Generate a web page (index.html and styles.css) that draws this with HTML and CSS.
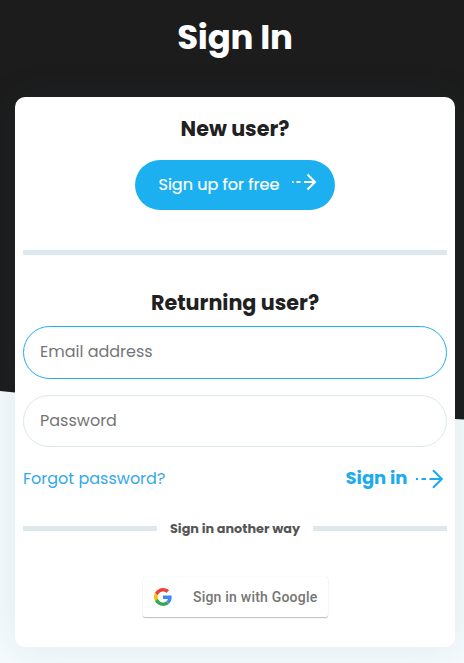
FILE: index.html
```html
<!DOCTYPE html>
<html lang="en">
<head>
<meta charset="utf-8">
<title>Sign In</title>
<link rel="stylesheet" href="styles.css">
</head>
<body>
<svg class="backdrop" viewBox="0 0 464 663" aria-hidden="true"><path fill="#1c1c1c" d="M0 0H464V419.5L455 419Q250 410 15 392.4L0 391Z"/></svg>
<main class="page">
  <h1 class="title"><span>Sign In</span></h1>
  <section class="card">
    <h2 class="heading new"><span>New user?</span></h2>
    <a class="signup" href="#"><span class="signup-label">Sign up for free</span>
      <svg width="26" height="18" viewBox="0 0 26 18" fill="none" stroke="currentColor" stroke-width="2"><path d="M1 9h1.6M5.5 9h4M13 9h11M16.5 1.5 24 9l-7.5 7.5"/></svg>
    </a>
    <hr class="rule">
    <h2 class="heading returning"><span>Returning user?</span></h2>
    <form class="form">
      <input class="field email" type="text" placeholder="Email address">
      <input class="field password" type="password" placeholder="Password">
      <div class="actions">
        <a class="forgot" href="#">Forgot password?</a>
        <button class="signin" type="button"><span>Sign in</span>
          <svg width="29" height="20" viewBox="0 0 29 20" fill="none" stroke="currentColor" stroke-width="2.1"><path d="M1 10h2M6.5 10h4.5M14.5 10h12.5M18 1.2 26.8 10 18 18.8"/></svg>
        </button>
      </div>
    </form>
    <div class="another"><span class="another-label">Sign in another way</span></div>
    <button class="google" type="button">
      <svg width="18" height="18" viewBox="0 0 48 48"><path fill="#EA4335" d="M24 9.5c3.54 0 6.71 1.22 9.21 3.6l6.85-6.85C35.9 2.38 30.47 0 24 0 14.62 0 6.51 5.38 2.56 13.22l7.98 6.19C12.43 13.72 17.74 9.5 24 9.5z"/><path fill="#4285F4" d="M46.98 24.55c0-1.57-.15-3.09-.38-4.55H24v9.02h12.94c-.58 2.96-2.26 5.48-4.78 7.18l7.73 6c4.51-4.18 7.09-10.36 7.09-17.65z"/><path fill="#FBBC05" d="M10.53 28.59c-.48-1.45-.76-2.99-.76-4.59s.27-3.14.76-4.59l-7.98-6.19C.92 16.46 0 20.12 0 24c0 3.88.92 7.54 2.56 10.78l7.97-6.19z"/><path fill="#34A853" d="M24 48c6.48 0 11.93-2.13 15.89-5.81l-7.73-6c-2.15 1.45-4.92 2.3-8.16 2.3-6.26 0-11.57-4.22-13.47-9.91l-7.98 6.19C6.51 42.62 14.62 48 24 48z"/></svg>
      <span>Sign in with Google</span>
    </button>
  </section>
</main>
</body>
</html>
```
FILE: styles.css
```css
* { box-sizing: border-box; }
body { margin: 0; height: 663px; overflow: hidden; background: #f4fafd; color: #212121; font-family: Poppins, Inter, sans-serif; }
.backdrop { position: absolute; inset: 0; width: 464px; height: 663px; }
.page { position: relative; padding: 15px 9px 0 15px; }
.title { margin: 0 0 38px; height: 44px; line-height: 44px; text-align: center; color: #fff; font-size: 34px; font-weight: 700; letter-spacing: -.2px; }
.card { height: 550px; padding: 18px 8px 0; background: #fff; border-radius: 10px; box-shadow: 0 0 40px rgba(40, 80, 95, .09); display: flex; flex-direction: column; }
.heading { margin: 0; height: 28px; line-height: 28px; text-align: center; font-size: 20.7px; font-weight: 700; }
.returning { margin-top: 34px; }
.signup { align-self: center; margin-top: 17px; width: 200px; height: 50px; padding: 0 18px 0 23.5px; border-radius: 25px; background: #1db0f0; color: #fff; display: flex; align-items: center; justify-content: space-between; text-decoration: none; font-size: 16px; -webkit-text-stroke: .2px currentColor; }
.signup-label { margin-bottom: 2px; white-space: nowrap; }
.signup svg { margin-bottom: 6px; }
.rule { width: 100%; height: 5px; margin: 40px 0 0; border: 0; background: #dce8ec; }
.form { margin-top: 9px; display: flex; flex-direction: column; }
.field { width: 100%; height: 53px; padding: 0 16px 2px; border: 1px solid #dce8ec; border-radius: 27px; outline: 0; background: #fff; font: 400 16px Poppins, Inter, sans-serif; }
.field::placeholder { color: #757575; opacity: 1; }
.email { border-color: #1db0f0; }
.password { margin-top: 16px; height: 52px; }
.actions { display: flex; align-items: center; justify-content: space-between; height: 30px; margin-top: 16px; padding-right: 3.5px; }
.forgot { color: #35a7ec; font-size: 16px; font-weight: 400; text-decoration: none; }
.signin { padding: 0 0 2px; border: 0; background: none; color: #1dabef; display: flex; align-items: center; gap: 7px; font: 700 18px Poppins, Inter, sans-serif; }
.signin svg { margin-top: 3px; }
.another { display: flex; align-items: center; height: 20px; margin-top: 25px; gap: 13px; }
.another::before, .another::after { content: ""; flex: 1; height: 5px; background: #dce8ec; }
.another-label { width: 130px; padding-top: 1px; line-height: 20px; white-space: nowrap; color: #555; font-size: 12.8px; font-weight: 700; }
.google { align-self: center; margin-top: 39px; width: 185px; height: 40px; padding: 0 10px 0 11px; border: 0; border-radius: 2px; background: #fff; box-shadow: 0 1px 1px rgba(0, 0, 0, .25), 0 0 1px rgba(0, 0, 0, .15); display: flex; align-items: center; gap: 21.5px; color: #757575; font: 500 14px Roboto, sans-serif; letter-spacing: .21px; white-space: nowrap; }
.google svg { flex: none; }
```
